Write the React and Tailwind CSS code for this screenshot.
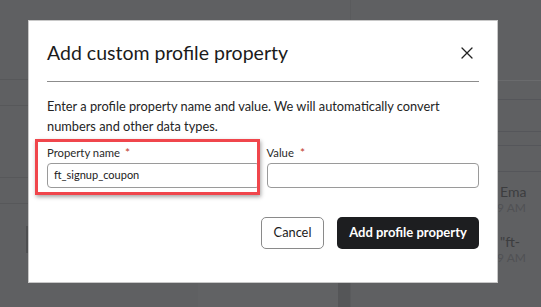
import React from "react";

function Row({ h, className = "", children }) {
  return <div className={`border-t border-[#57585a] ${className}`} style={{ height: h }}>{children}</div>;
}

export default function App() {
  return (
    <div
      className="relative w-[541px] h-[307px] overflow-hidden bg-[#5f6062] flex"
      style={{ fontFamily: 'Lato, "Noto Sans", sans-serif' }}
    >
      {/* faint underlying page */}
      <div className="w-[28px] flex flex-col pt-[79px]">
        <Row h={26} />
        <Row h={72} />
        <Row h={26} />
        <div className="border-t border-[#57585a] flex justify-end pt-[22px]">
          <div className="w-[2px] h-[27px] bg-[#4e4f51]" />
        </div>
      </div>
      <div className="w-[310px] flex flex-col justify-end">
        <div className="h-[24px] ml-[170px] bg-[#616264]" />
      </div>
      <div className="w-[12px] flex flex-col justify-end">
        <div className="h-[24px] bg-[#555658]" />
      </div>
      <div className="flex-1 flex flex-col pt-[80px] border-l border-[#5a5b5d]">
        <div className="border-t border-[#6a6b6d] h-[19px]" />
        <div className="border-t border-[#55565a] h-[32px]" />
        <div className="border-t border-[#55565a] h-[14px]" />
        <div className="border-t border-[#55565a] h-[26px]" />
        <div className="border-t border-[#55565a] flex flex-col pl-[146px] pt-[12px] gap-[18px] text-[#3c3d3f]">
          <div className="flex flex-col leading-[16px]">
            <span className="text-[14px] pl-[3px]">Ema</span>
            <span className="text-[12px] text-[#505154]">9 AM</span>
          </div>
          <div className="flex flex-col leading-[16px]">
            <span className="text-[14px] pl-[3px]">"ft-</span>
            <span className="text-[12px] text-[#505154]">9 AM</span>
          </div>
        </div>
      </div>

      {/* dialog overlay */}
      <div className="absolute left-[28px] top-[20px] w-[470px] h-[263px] bg-white border border-[#c8c8c8] flex flex-col px-[18px]">
        <div className="flex items-center justify-between h-[61px] pt-[3px] border-b border-[#8c8c8c]">
          <h2 className="text-[19.5px] leading-[26px] text-[#1b1b1b]">Add custom profile property</h2>
          <svg width="12" height="12" viewBox="0 0 12 12" className="mr-[6px] mt-[1px]">
            <path d="M1 1 L11 11 M11 1 L1 11" stroke="#222" strokeWidth="1.3" strokeLinecap="round" />
          </svg>
        </div>
        <p className="mt-[14px] text-[12.8px] leading-[20px] text-[#242424]">
          Enter a profile property name and value. We will automatically convert
          <br />
          numbers and other data types.
        </p>
        <div className="mt-[8px] grid grid-cols-2 gap-x-[7px]">
          <div className="relative flex flex-col">
            <label className="text-[11.3px] leading-[18px] text-[#2a2a2a] flex items-center">
              Property name <span className="ml-[5px] text-[#c0392b] text-[12px]">*</span>
            </label>
            <div className="mt-[1px] h-[25px] rounded-[4px] border border-[#9a9a9a] flex items-center px-[6px] text-[11px] text-[#1b1b1b]">
              ft_signup_coupon
            </div>
            <div className="absolute left-[-12px] top-[-5px] w-[225px] h-[56px] border-[3px] border-[#f0464c] shadow-[1px_2px_4px_rgba(0,0,0,0.35)]" />
          </div>
          <div className="flex flex-col">
            <label className="text-[11.3px] leading-[18px] text-[#2a2a2a] flex items-center">
              Value <span className="ml-[6px] text-[#c0392b] text-[12px]">*</span>
            </label>
            <div className="mt-[1px] h-[25px] rounded-[4px] border border-[#9a9a9a]" />
          </div>
        </div>
        <div className="mt-[29px] flex justify-end gap-[13px]">
          <button className="h-[32px] w-[63px] rounded-[5px] border border-[#8a8a8a] bg-white text-[12.8px] text-[#1b1b1b]">
            Cancel
          </button>
          <button className="h-[32px] w-[142px] rounded-[5px] bg-[#1d1e20] text-[13px] font-bold text-white">
            Add profile property
          </button>
        </div>
      </div>
    </div>
  );
}
